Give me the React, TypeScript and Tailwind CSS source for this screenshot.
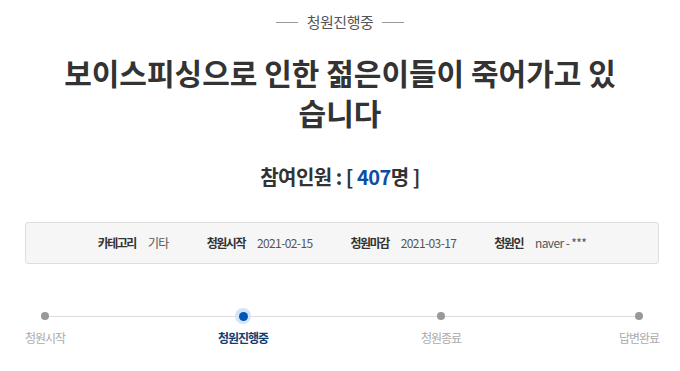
export default function App() {
  const info = [
    { label: "카테고리", value: "기타" },
    { label: "청원시작", value: "2021-02-15" },
    { label: "청원마감", value: "2021-03-17" },
    { label: "청원인", value: "naver - ***" },
  ];
  const steps = [
    { name: "청원시작", active: false },
    { name: "청원진행중", active: true },
    { name: "청원종료", active: false },
    { name: "답변완료", active: false },
  ];

  return (
    <div className="w-[680px] h-[371px] bg-white overflow-hidden font-['Noto_Sans_CJK_KR',sans-serif]">
      {/* Status header */}
      <div className="pt-[11px] flex items-center justify-center gap-[9px] h-[33px]">
        <span className="w-[22px] h-px bg-[#999]" />
        <span className="text-[15px] leading-[22px] text-[#555] tracking-[-0.5px]">청원진행중</span>
        <span className="w-[22px] h-px bg-[#999]" />
      </div>

      {/* Title */}
      <h1 className="mt-[19px] mx-auto w-[566px] text-center text-[30px] leading-[40px] font-bold text-[#333] break-all">
        보이스피싱으로 인한 젊은이들이 죽어가고 있습니다
      </h1>

      {/* Count */}
      <p className="mt-[31px] text-center text-[20px] leading-[28px] font-bold text-[#333] tracking-[-0.5px]">
        참여인원 : [ <span className="text-[#0b4ea2]">407</span>명 ]
      </p>

      {/* Info box */}
      <div className="mt-[31px] ml-[25px] mr-[21px] h-[42px] border border-[#dedede] bg-[#f6f6f6] rounded-[3px] flex items-center justify-center gap-[38px] text-[12px]">
        {info.map((it) => (
          <div key={it.label} className="flex items-center gap-[12px]">
            <span className="font-bold text-[#333] tracking-[-1.5px]">{it.label}</span>
            <span className="text-[#555] tracking-[-0.6px]">{it.value}</span>
          </div>
        ))}
      </div>

      {/* Progress */}
      <div className="relative mt-[44px] ml-[19px] mr-[15px]">
        <div className="absolute left-[26px] right-[26px] top-[8px] h-px bg-[#dcdcdc]" />
        <div className="relative flex justify-between">
          {steps.map((s) => (
            <div key={s.name} className="w-[52px] flex flex-col items-center">
              <div className="h-[16px] flex items-center justify-center">
                {s.active ? (
                  <span className="w-[16px] h-[16px] rounded-full bg-[#d3e5fa] flex items-center justify-center">
                    <span className="w-[9px] h-[9px] rounded-full bg-[#0057b8]" />
                  </span>
                ) : (
                  <span className="w-[8px] h-[8px] rounded-full bg-[#999]" />
                )}
              </div>
              <span
                className={
                  s.active
                    ? "mt-[5px] whitespace-nowrap text-[12px] leading-[18px] font-bold text-[#123d73] tracking-[-1px]"
                    : "mt-[5px] whitespace-nowrap text-[12px] leading-[18px] text-[#aaa] tracking-[-1px]"
                }
              >
                {s.name}
              </span>
            </div>
          ))}
        </div>
      </div>
    </div>
  );
}
